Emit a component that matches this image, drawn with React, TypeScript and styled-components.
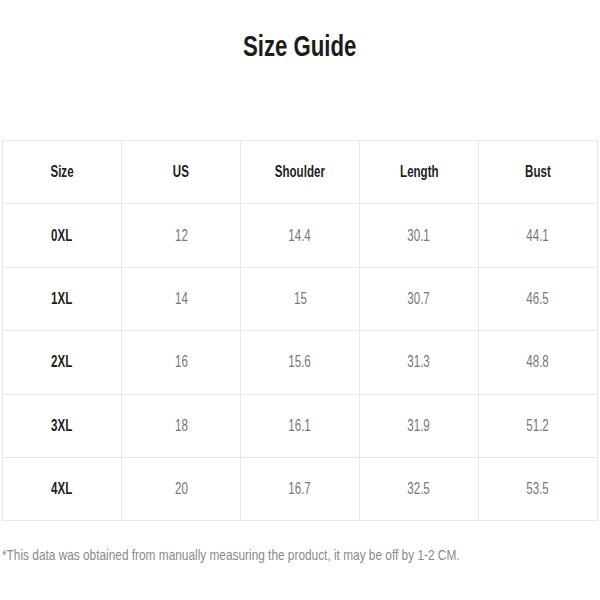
import React from "react";
import styled, { createGlobalStyle } from "styled-components";

const Global = createGlobalStyle`
  html, body { margin: 0; padding: 0; background: #ffffff; }
  body { font-family: "Liberation Sans", Arial, sans-serif; }
`;

const Page = styled.div`
  width: 600px;
  height: 600px;
  box-sizing: border-box;
  padding: 0 2px;
  display: flex;
  flex-direction: column;
  background: #fff;
`;

const TitleBar = styled.div`
  height: 140px;
  display: flex;
  justify-content: center;
  padding-top: 28px;
  box-sizing: border-box;
`;

const Title = styled.h1`
  margin: 0;
  font-size: 30px;
  line-height: 36px;
  font-weight: 700;
  color: #1c1c1c;
  display: inline-block;
  transform: scaleX(0.74);
  white-space: nowrap;
`;

const Table = styled.table`
  width: 596px;
  border-collapse: collapse;
  table-layout: fixed;
`;

const Cell = styled.td<{ $strong?: boolean }>`
  border: 1px solid #e8e8e8;
  height: 62.4px;
  padding: 0;
  text-align: center;
  vertical-align: middle;
  font-size: 17px;
  font-weight: ${(p) => (p.$strong ? 700 : 400)};
  color: ${(p) => (p.$strong ? "#1e1e1e" : "#777777")};
`;

const Squeeze = styled.span`
  display: inline-block;
  transform: scaleX(0.68);
  white-space: nowrap;
`;

const Note = styled.p`
  margin: 25px 0 0;
  font-size: 15px;
  line-height: 18px;
  color: #8a8a8a;
  white-space: nowrap;
  transform: scaleX(0.79);
  transform-origin: left center;
`;

const headers = ["Size", "US", "Shoulder", "Length", "Bust"];
const rows = [
  ["0XL", "12", "14.4", "30.1", "44.1"],
  ["1XL", "14", "15", "30.7", "46.5"],
  ["2XL", "16", "15.6", "31.3", "48.8"],
  ["3XL", "18", "16.1", "31.9", "51.2"],
  ["4XL", "20", "16.7", "32.5", "53.5"],
];

export default function App() {
  return (
    <>
      <Global />
      <Page>
        <TitleBar>
          <Title>Size Guide</Title>
        </TitleBar>
        <Table>
          <tbody>
            <tr>
              {headers.map((h) => (
                <Cell key={h} $strong>
                  <Squeeze>{h}</Squeeze>
                </Cell>
              ))}
            </tr>
            {rows.map((r) => (
              <tr key={r[0]}>
                {r.map((v, i) => (
                  <Cell key={i} $strong={i === 0}>
                    <Squeeze>{v}</Squeeze>
                  </Cell>
                ))}
              </tr>
            ))}
          </tbody>
        </Table>
        <Note>
          *This data was obtained from manually measuring the product, it may be off by 1-2 CM.
        </Note>
      </Page>
    </>
  );
}
